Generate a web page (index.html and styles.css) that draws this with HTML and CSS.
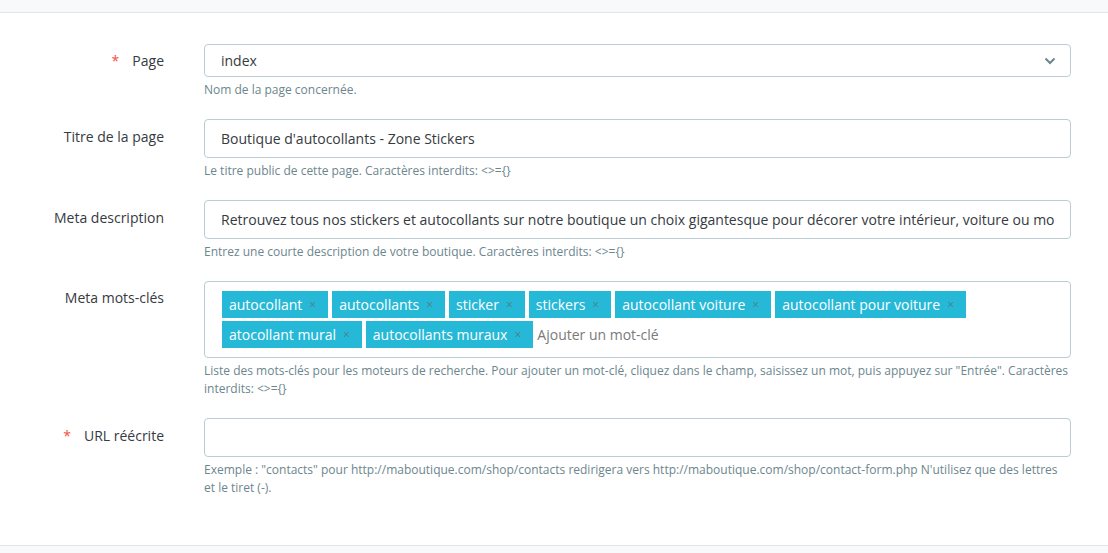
FILE: index.html
```html
<!DOCTYPE html>
<html lang="fr">
<head>
	<meta charset="UTF-8" />
	<title>Page SEO</title>
	<link rel="stylesheet" href="styles.css">
</head>
<body>
<div class="top-band"></div>
<form class="seo-form">
	<div class="form-row">
		<label class="form-label label-select"><span class="required">*</span>Page</label>
		<div class="form-field">
			<div class="select-box">
				<span>index</span>
				<svg class="chevron" width="12" height="8" viewBox="0 0 12 8"><path d="M1.5 1.5 L6 6 L10.5 1.5" fill="none" stroke="#6c868e" stroke-width="2"/></svg>
			</div>
			<p class="help">Nom de la page concernée.</p>
		</div>
	</div>

	<div class="form-row">
		<label class="form-label">Titre de la page</label>
		<div class="form-field">
			<input class="text-input" type="text" value="Boutique d'autocollants - Zone Stickers">
			<p class="help">Le titre public de cette page. Caractères interdits: &lt;&gt;={}</p>
		</div>
	</div>

	<div class="form-row">
		<label class="form-label">Meta description</label>
		<div class="form-field">
			<input class="text-input" type="text" value="Retrouvez tous nos stickers et autocollants sur notre boutique un choix gigantesque pour décorer votre intérieur, voiture ou moto">
			<p class="help">Entrez une courte description de votre boutique. Caractères interdits: &lt;&gt;={}</p>
		</div>
	</div>

	<div class="form-row">
		<label class="form-label label-tags">Meta mots-clés</label>
		<div class="form-field">
			<div class="tags-box">
				<span class="tag">autocollant<span class="tag-close">×</span></span>
				<span class="tag">autocollants<span class="tag-close">×</span></span>
				<span class="tag">sticker<span class="tag-close">×</span></span>
				<span class="tag">stickers<span class="tag-close">×</span></span>
				<span class="tag">autocollant voiture<span class="tag-close">×</span></span>
				<span class="tag">autocollant pour voiture<span class="tag-close">×</span></span>
				<span class="tag">atocollant mural<span class="tag-close">×</span></span>
				<span class="tag">autocollants muraux<span class="tag-close">×</span></span>
				<input class="tag-input" type="text" placeholder="Ajouter un mot-clé">
			</div>
			<p class="help">Liste des mots-clés pour les moteurs de recherche. Pour ajouter un mot-clé, cliquez dans le champ, saisissez un mot, puis appuyez sur "Entrée". Caractères interdits: &lt;&gt;={}</p>
		</div>
	</div>

	<div class="form-row">
		<label class="form-label"><span class="required">*</span>URL réécrite</label>
		<div class="form-field">
			<input class="text-input" type="text" value="">
			<p class="help">Exemple : "contacts" pour http://maboutique.com/shop/contacts redirigera vers http://maboutique.com/shop/contact-form.php N'utilisez que des lettres et le tiret (-).</p>
		</div>
	</div>
</form>
<div class="bottom-band"></div>
</body>
</html>
```

FILE: styles.css
```css
body {
	margin: 0;
	font-family: "Open Sans", "Liberation Sans", sans-serif;
	color: #363a41;
	background: #fff;
}
.top-band {
	height: 12px;
	background-color: #f8f9fb;
	border-bottom: 1px solid #dfe6ea;
}
.bottom-band {
	height: 8px;
	background-color: #f8f9fb;
	border-top: 1px solid #dfe6ea;
}
.seo-form {
	padding: 31px 37px 28px 0;
}
.form-row {
	display: grid;
	grid-template-columns: 164px 1fr;
	column-gap: 40px;
	margin-bottom: 20px;
}
.form-label {
	text-align: right;
	font-size: 14px;
	line-height: 22px;
	padding-top: 7px;
}
.form-label.label-select {
	padding-top: 6px;
}
.form-label.label-tags {
	padding-top: 6px;
}
.required {
	color: #f54c3e;
	margin-right: 13px;
}
.form-field {
	min-width: 0;
}
.select-box {
	display: flex;
	align-items: center;
	justify-content: space-between;
	height: 33px;
	box-sizing: border-box;
	padding: 0 14px 0 16px;
	border: 1px solid #bbcdd2;
	border-radius: 4px;
	font-size: 14px;
}
.text-input {
	display: block;
	width: 100%;
	height: 39px;
	box-sizing: border-box;
	padding: 0 16px;
	border: 1px solid #bbcdd2;
	border-radius: 4px;
	font-family: inherit;
	font-size: 14px;
	color: #363a41;
	background: #fff;
	outline: none;
}
.help {
	margin: 4px 0 0;
	font-size: 12px;
	line-height: 18px;
	color: #6c868e;
}
.tags-box {
	display: flex;
	flex-wrap: wrap;
	gap: 3px 4px;
	padding: 9px 18px 9px 17px;
	border: 1px solid #bbcdd2;
	border-radius: 4px;
}
.tag {
	display: inline-flex;
	align-items: center;
	height: 27px;
	padding: 0 12px 0 7px;
	background-color: #25b9d7;
	color: #fff;
	font-size: 14px;
}
.tag-close {
	margin-left: 7px;
	font-size: 12px;
	color: #4f7f8b;
}
.tag-input {
	flex: 1;
	min-width: 120px;
	height: 27px;
	border: none;
	padding: 0;
	font-family: inherit;
	font-size: 14px;
	outline: none;
}
.tag-input::placeholder {
	color: #7a7a7a;
}
```
